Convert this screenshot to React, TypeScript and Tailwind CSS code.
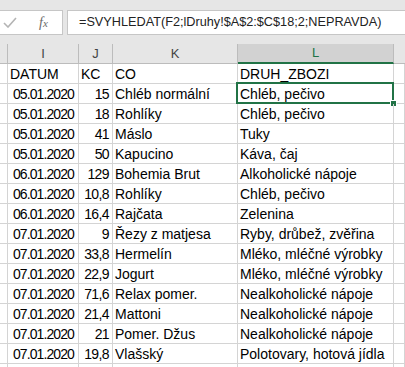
import React from "react";

const rows: [string, string, string, string][] = [
  ["05.01.2020", "15", "Chléb normální", "Chléb, pečivo"],
  ["05.01.2020", "18", "Rohlíky", "Chléb, pečivo"],
  ["05.01.2020", "41", "Máslo", "Tuky"],
  ["05.01.2020", "50", "Kapucino", "Káva, čaj"],
  ["06.01.2020", "129", "Bohemia Brut", "Alkoholické nápoje"],
  ["06.01.2020", "10,8", "Rohlíky", "Chléb, pečivo"],
  ["06.01.2020", "16,4", "Rajčata", "Zelenina"],
  ["07.01.2020", "9", "Řezy z matjesa", "Ryby, drůbež, zvěřina"],
  ["07.01.2020", "33,8", "Hermelín", "Mléko, mléčné výrobky"],
  ["07.01.2020", "22,9", "Jogurt", "Mléko, mléčné výrobky"],
  ["07.01.2020", "71,6", "Relax pomer.", "Nealkoholické nápoje"],
  ["07.01.2020", "21,4", "Mattoni", "Nealkoholické nápoje"],
  ["07.01.2020", "21", "Pomer. Džus", "Nealkoholické nápoje"],
  ["07.01.2020", "19,8", "Vlašský", "Polotovary, hotová jídla"],
];

const cell =
  "h-[20px] shrink-0 border-r border-b border-[#d4d4d4] flex items-center pt-[2px] overflow-hidden whitespace-nowrap";

function Row({ c, sel }: { c: [string, string, string, string]; sel?: boolean }) {
  return (
    <div className="flex">
      <div className={`${cell} w-[8px]`} />
      <div className={`${cell} w-[71px] justify-end pr-[4px] tracking-[-0.9px]`}>{c[0]}</div>
      <div className={`${cell} w-[34px] justify-end pr-[3px] tracking-[-0.6px]`}>{c[1]}</div>
      <div className={`${cell} w-[125px] pl-[2px]`}>{c[2]}</div>
      <div className={`${cell} w-[156px] pl-[2px] relative overflow-visible`}>
        {c[3]}
        {sel && (
          <>
            <div className="absolute -left-[2px] -top-[2px] w-[158px] h-[22px] border-2 border-[#217346]" />
            <div className="absolute -right-[4px] -bottom-[4px] w-[7px] h-[7px] bg-[#217346] border border-white" />
          </>
        )}
      </div>
      <div className={`${cell} flex-1`} />
    </div>
  );
}

export default function App() {
  return (
    <div
      className="w-[405px] h-[367px] overflow-hidden bg-white text-[14px] text-black"
      style={{ fontFamily: '"Liberation Sans", Arial, sans-serif' }}
    >
      {/* formula bar */}
      <div className="h-[44px] bg-[#e6e6e6] pt-[10px] flex">
        <div className="w-[63px] h-[25px] bg-white border-r border-y border-[#c6c6c6] flex items-center">
          <svg width="14" height="11" viewBox="0 0 14 11" className="ml-[3px]">
            <path d="M1 6 L5 10 L13 1" fill="none" stroke="#b4b4b4" strokeWidth="1.6" />
          </svg>
          <span
            className="ml-[22px] text-[14px] italic text-[#6a6a6a]"
            style={{ fontFamily: '"Liberation Serif", "Times New Roman", serif' }}
          >
            f<span className="text-[11px]">x</span>
          </span>
        </div>
        <div className="ml-[4px] flex-1 h-[25px] bg-white border-l border-y border-[#c6c6c6] flex items-center pl-[11px] text-[12.7px] text-[#222]">
          =SVYHLEDAT(F2;lDruhy!$A$2:$C$18;2;NEPRAVDA)
        </div>
      </div>
      {/* column headers */}
      <div className="flex h-[20px] bg-[#e6e6e6] text-[13px] text-[#444]">
        <div className="w-[8px] border-r border-b border-[#bcbcbc]" />
        <div className="w-[71px] border-r border-b border-[#bcbcbc] flex items-center justify-center">I</div>
        <div className="w-[34px] border-r border-b border-[#bcbcbc] flex items-center justify-center">J</div>
        <div className="w-[125px] border-r border-b border-[#bcbcbc] flex items-center justify-center">K</div>
        <div className="w-[156px] border-r border-[#bcbcbc] bg-[#d2d2d2] border-b-2 border-b-[#217346] flex items-center justify-center text-[#217346]">
          L
        </div>
        <div className="flex-1 border-b border-[#bcbcbc]" />
      </div>
      {/* data */}
      <div className="flex">
        <div className={`${cell} w-[8px]`} />
        <div className={`${cell} w-[71px] pl-[2px]`}>DATUM</div>
        <div className={`${cell} w-[34px] pl-[2px]`}>KC</div>
        <div className={`${cell} w-[125px] pl-[2px]`}>CO</div>
        <div className={`${cell} w-[156px] pl-[2px]`}>DRUH_ZBOZI</div>
        <div className={`${cell} flex-1`} />
      </div>
      {rows.map((r, i) => (
        <Row key={i} c={r} sel={i === 0} />
      ))}
      <div className="flex">
        <div className={`${cell} w-[8px]`} />
        <div className={`${cell} w-[71px]`} />
        <div className={`${cell} w-[34px]`} />
        <div className={`${cell} w-[125px]`} />
        <div className={`${cell} w-[156px]`} />
        <div className={`${cell} flex-1`} />
      </div>
    </div>
  );
}
